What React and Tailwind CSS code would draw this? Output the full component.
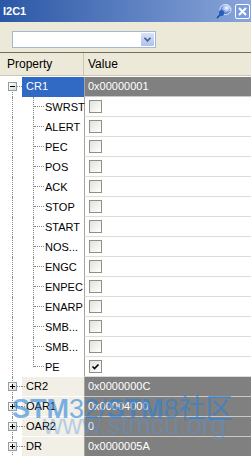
import React from "react";

const subs = [
  { name: "SWRST" },
  { name: "ALERT" },
  { name: "PEC" },
  { name: "POS" },
  { name: "ACK" },
  { name: "STOP" },
  { name: "START" },
  { name: "NOS..." },
  { name: "ENGC" },
  { name: "ENPEC" },
  { name: "ENARP" },
  { name: "SMB..." },
  { name: "SMB..." },
  { name: "PE", checked: true, last: true },
];

const regs = [
  { name: "CR2", value: "0x0000000C" },
  { name: "OAR1", value: "0x00004000" },
  { name: "OAR2", value: "0" },
  { name: "DR", value: "0x0000005A" },
];

// little +/- box of the tree
function Expander({ open }) {
  return (
    <div className="absolute left-[8px] top-[5px] w-[9px] h-[9px] border border-[#8c9eaa] bg-gradient-to-br from-white to-[#d8d8cc] flex items-center justify-center">
      <div className="relative w-[5px] h-[5px]">
        <div className="absolute left-0 top-[2px] w-[5px] h-px bg-black" />
        {!open && <div className="absolute left-[2px] top-0 w-px h-[5px] bg-black" />}
      </div>
    </div>
  );
}

function Checkbox({ checked }) {
  return (
    <div className="ml-[4px] w-[13px] h-[13px] border border-[#8e8e8a] bg-gradient-to-br from-[#e2e2da] to-white flex items-center justify-center">
      {checked && (
        <svg width="9" height="9" viewBox="0 0 9 9">
          <path d="M1.5 4.5 L3.5 6.5 L7.5 2.5" stroke="#000" strokeWidth="1.6" fill="none" />
        </svg>
      )}
    </div>
  );
}

function TopRow({ name, value, selected, open }) {
  return (
    <div className="flex h-[20px]">
      <div className="relative w-[22px] shrink-0">
        <div
          className={
            "absolute left-[12px] bottom-0 border-l border-dotted border-[#8a8a8a] " +
            (selected ? "top-[10px]" : "top-0")
          }
        />
        <div className="absolute left-[17px] top-[9px] w-[5px] border-t border-dotted border-[#8a8a8a]" />
        <Expander open={open} />
      </div>
      <div
        className={
          "w-[62px] shrink-0 flex items-center border-b " +
          (selected
            ? "bg-[#316ac5] text-white border-[#316ac5]"
            : "bg-[#f1efe6] text-black border-white")
        }
      >
        {!selected && <span className="w-[3px] border-t border-dotted border-[#8a8a8a] mr-px" />}
        <span className={selected ? "pl-[4px]" : ""}>{name}</span>
      </div>
      <div className="flex-1 flex items-center border-l border-b border-l-[#a7a59b] border-b-[#c9c9c9] bg-[#808080] text-white pl-[3px]">
        {value}
      </div>
    </div>
  );
}

function SubRow({ name, checked, last }) {
  return (
    <div className="flex h-[20px]">
      <div className="relative w-[22px] shrink-0">
        <div className="absolute left-[12px] top-0 bottom-0 border-l border-dotted border-[#8a8a8a]" />
      </div>
      <div className="relative w-[62px] shrink-0 flex items-center pl-[23px] text-black">
        <div
          className={
            "absolute left-[11px] top-0 border-l border-dotted border-[#8a8a8a] " +
            (last ? "h-[10px]" : "bottom-0")
          }
        />
        <div className="absolute left-[12px] top-[9px] w-[10px] border-t border-dotted border-[#8a8a8a]" />
        {name}
      </div>
      <div className="flex-1 flex items-center border-l border-b border-l-[#a7a59b] border-b-[#dedcd3] bg-white">
        <Checkbox checked={checked} />
      </div>
    </div>
  );
}

export default function App() {
  return (
    <div className="relative w-[251px] h-[456px] overflow-hidden bg-white font-['Liberation_Sans',Arial,sans-serif] text-[11px] leading-none">
      {/* title bar */}
      <div className="h-[22px] flex items-center justify-between bg-gradient-to-r from-[#2a57a6] to-[#8aa5d9] pl-[3px] pr-[1px]">
        <span className="text-white font-bold text-[11px]">I2C1</span>
        <div className="flex items-center gap-[3px]">
          <svg width="17" height="17" viewBox="0 0 17 17">
            <defs>
              <radialGradient id="pin" cx="0.6" cy="0.35" r="0.7">
                <stop offset="0" stopColor="#ffffff" />
                <stop offset="0.5" stopColor="#8fb0ec" />
                <stop offset="1" stopColor="#1f4fb0" />
              </radialGradient>
            </defs>
            <path d="M2 15 L7 10" stroke="#1d3f8f" strokeWidth="1.5" />
            <ellipse cx="10.5" cy="6.5" rx="5.5" ry="5" fill="url(#pin)" stroke="#ffffff" strokeWidth="0.8" />
            <ellipse cx="6.5" cy="10" rx="2.5" ry="3" fill="#2a5bc0" />
          </svg>
          <div className="w-[15px] h-[15px] rounded-[2px] border border-white bg-[#7b9be0] flex items-center justify-center">
            <svg width="9" height="9" viewBox="0 0 9 9">
              <path d="M1 1 L8 8 M8 1 L1 8" stroke="#fff" strokeWidth="2" />
            </svg>
          </div>
        </div>
      </div>

      {/* toolbar with combo */}
      <div className="h-[30px] bg-[#ece9d8] pl-[12px] pt-[9px]">
        <div className="w-[144px] h-[17px] border border-[#a4b8d6] bg-white flex justify-end p-px">
          <div className="w-[13px] h-full rounded-[1px] bg-gradient-to-b from-[#d6e2fb] to-[#aec1ef] flex items-center justify-center">
            <svg width="7" height="5" viewBox="0 0 7 5">
              <path d="M0.5 0.8 L3.5 3.8 L6.5 0.8" stroke="#4d6185" strokeWidth="1.6" fill="none" />
            </svg>
          </div>
        </div>
      </div>

      {/* header */}
      <div className="flex h-[24px] border-t border-[#716f64] bg-[#ece9d8] border-b border-b-[#cbc7b8] text-[12px] text-black">
        <div className="w-[84px] shrink-0 flex items-center pl-[7px] border-r border-[#c9c5b5]">Property</div>
        <div className="flex-1 flex items-center pl-[4px]">Value</div>
      </div>

      {/* grid */}
      <div className="pt-px">
        <TopRow name="CR1" value="0x00000001" selected open />
        {subs.map((s, i) => (
          <SubRow key={i} name={s.name} checked={s.checked} last={s.last} />
        ))}
        {regs.map((r) => (
          <TopRow key={r.name} name={r.name} value={r.value} />
        ))}
      </div>

      {/* watermark overlay */}
      <div className="pointer-events-none absolute left-[12px] top-[396px] text-[27px] leading-none whitespace-nowrap text-[rgba(40,130,220,0.6)] font-['Liberation_Sans','Noto_Sans_CJK_SC',sans-serif]">
        <span className="font-bold">STM</span>32/<span className="font-bold">STM</span>8社区
      </div>
      <div className="pointer-events-none absolute left-[43px] top-[412px] text-[27px] leading-none whitespace-nowrap text-[rgba(80,150,225,0.38)] font-['Liberation_Sans',sans-serif]">
        www.stmcu.org
      </div>
    </div>
  );
}
